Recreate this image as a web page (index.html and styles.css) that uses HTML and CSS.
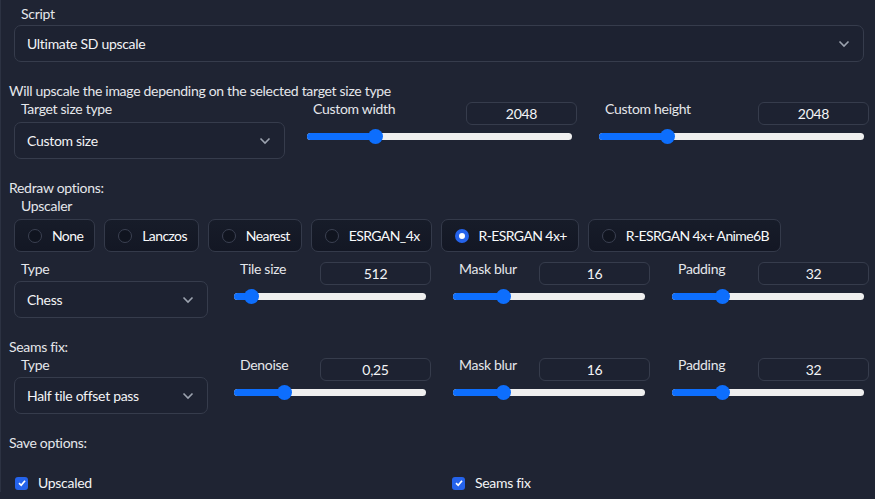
FILE: index.html
```html
<!DOCTYPE html>
<html>
	<head>
		<meta charset="UTF-8">
		<title>Ultimate SD upscale</title>
		<link rel="stylesheet" href="styles.css">
	</head>
	<body>
		<div class="panel">
			<div class="block">
				<div class="label">Script</div>
				<div class="dropdown big">
					<span>Ultimate SD upscale</span>
					<svg class="chev" width="12" height="8" viewBox="0 0 12 8"><polyline points="1.5,1.5 6,6 10.5,1.5" fill="none" stroke="#9ca3af" stroke-width="1.6"/></svg>
				</div>
			</div>

			<p class="info desc">Will upscale the image depending on the selected target size type</p>
			<div class="row three">
				<div class="col">
					<div class="label">Target size type</div>
					<div class="dropdown">
						<span>Custom size</span>
						<svg class="chev" width="12" height="8" viewBox="0 0 12 8"><polyline points="1.5,1.5 6,6 10.5,1.5" fill="none" stroke="#9ca3af" stroke-width="1.6"/></svg>
					</div>
				</div>
				<div class="col slider">
					<div class="slider-head">
						<span class="label">Custom width</span>
						<div class="num">2048</div>
					</div>
					<div class="range"><div class="fill" style="width:25.5%"></div><div class="thumb" style="left:25.5%"></div></div>
				</div>
				<div class="col slider">
					<div class="slider-head">
						<span class="label">Custom height</span>
						<div class="num">2048</div>
					</div>
					<div class="range"><div class="fill" style="width:25.5%"></div><div class="thumb" style="left:25.5%"></div></div>
				</div>
			</div>

			<p class="info sect">Redraw options:</p>
			<div class="block">
				<div class="label">Upscaler</div>
				<div class="radios">
					<label class="radio"><i></i>None</label>
					<label class="radio"><i></i>Lanczos</label>
					<label class="radio"><i></i>Nearest</label>
					<label class="radio"><i></i>ESRGAN_4x</label>
					<label class="radio on"><i></i>R-ESRGAN 4x+</label>
					<label class="radio"><i></i>R-ESRGAN 4x+ Anime6B</label>
				</div>
			</div>
			<div class="row four after-radios">
				<div class="col">
					<div class="label">Type</div>
					<div class="dropdown short">
						<span>Chess</span>
						<svg class="chev" width="12" height="8" viewBox="0 0 12 8"><polyline points="1.5,1.5 6,6 10.5,1.5" fill="none" stroke="#9ca3af" stroke-width="1.6"/></svg>
					</div>
				</div>
				<div class="col slider">
					<div class="slider-head"><span class="label">Tile size</span><div class="num">512</div></div>
					<div class="range"><div class="fill" style="width:9%"></div><div class="thumb" style="left:9%"></div></div>
				</div>
				<div class="col slider">
					<div class="slider-head"><span class="label">Mask blur</span><div class="num">16</div></div>
					<div class="range"><div class="fill" style="width:26%"></div><div class="thumb" style="left:26%"></div></div>
				</div>
				<div class="col slider">
					<div class="slider-head"><span class="label">Padding</span><div class="num">32</div></div>
					<div class="range"><div class="fill" style="width:26%"></div><div class="thumb" style="left:26%"></div></div>
				</div>
			</div>

			<p class="info sect">Seams fix:</p>
			<div class="row four">
				<div class="col">
					<div class="label">Type</div>
					<div class="dropdown short">
						<span>Half tile offset pass</span>
						<svg class="chev" width="12" height="8" viewBox="0 0 12 8"><polyline points="1.5,1.5 6,6 10.5,1.5" fill="none" stroke="#9ca3af" stroke-width="1.6"/></svg>
					</div>
				</div>
				<div class="col slider">
					<div class="slider-head"><span class="label">Denoise</span><div class="num">0,25</div></div>
					<div class="range"><div class="fill" style="width:26%"></div><div class="thumb" style="left:26%"></div></div>
				</div>
				<div class="col slider">
					<div class="slider-head"><span class="label">Mask blur</span><div class="num">16</div></div>
					<div class="range"><div class="fill" style="width:26%"></div><div class="thumb" style="left:26%"></div></div>
				</div>
				<div class="col slider">
					<div class="slider-head"><span class="label">Padding</span><div class="num">32</div></div>
					<div class="range"><div class="fill" style="width:26%"></div><div class="thumb" style="left:26%"></div></div>
				</div>
			</div>

			<p class="info sect">Save options:</p>
			<div class="checks">
				<label class="check"><i><svg width="10" height="10" viewBox="0 0 10 10"><polyline points="2,5.2 4.2,7.3 8,2.8" fill="none" stroke="#fff" stroke-width="1.7"/></svg></i>Upscaled</label>
				<label class="check"><i><svg width="10" height="10" viewBox="0 0 10 10"><polyline points="2,5.2 4.2,7.3 8,2.8" fill="none" stroke="#fff" stroke-width="1.7"/></svg></i>Seams fix</label>
			</div>
		</div>
	</body>
</html>
```

FILE: styles.css
```css
*{
	margin:0;
	padding:0;
	box-sizing:border-box;
}
body{
	background:#1f2433;
	color:#e5e7eb;
	font-family:Lato,"Noto Sans",sans-serif;
	font-size:14px;
	line-height:18px;
	letter-spacing:-0.3px;
	height:499px;
	overflow:hidden;
}
.panel{
	padding:5px 8px 0 8px;
	border-left:1px solid #2c3242;
}
.block{
	padding:0 3px 0 5px;
}
.label{
	display:block;
	padding-left:7px;
	color:#e5e7eb;
}
.dropdown{
	position:relative;
	display:flex;
	align-items:center;
	height:37px;
	margin-top:2px;
	padding:0 12px;
	border:1px solid #363c4c;
	border-radius:7px;
	background:#1d2231;
	color:#f3f4f6;
}
.dropdown .chev{
	position:absolute;
	right:13px;
	top:14px;
}
.dropdown.short{
	width:194px;
}
.info{
	color:#e5e7eb;
}
.desc{
	margin-top:20px;
}
.sect{
	margin-top:20px;
}
.row{
	display:grid;
	column-gap:21px;
	padding:0 0 0 5px;
}
.row.three{
	grid-template-columns:271px 271px 271px;
}
.row.four{
	grid-template-columns:198px 198px 198px 198px;
}
.row.after-radios{
	margin-top:8px;
}
.row .dropdown{
	margin-top:4px;
}
.row.four .dropdown{
	margin-top:3px;
}
.slider-head{
	display:flex;
	justify-content:space-between;
	align-items:flex-start;
	height:26px;
	margin-top:2px;
}
.slider-head .label{
	margin-top:-2px;
}
.num{
	width:111px;
	height:23px;
	border:1px solid #363c4c;
	border-radius:6px;
	background:#1d2231;
	text-align:center;
	line-height:21px;
	color:#f3f4f6;
}
.range{
	position:relative;
	height:7px;
	margin:5px 5px 0 1px;
	border-radius:4px;
	background:#efefef;
}
.range .fill{
	height:7px;
	border-radius:4px 0 0 4px;
	background:#0d6efd;
}
.range .thumb{
	position:absolute;
	top:-4px;
	width:15px;
	height:15px;
	margin-left:-7px;
	border-radius:50%;
	background:#0d6efd;
}
.radios{
	display:flex;
	gap:9px;
	margin-top:4px;
}
.radio{
	display:flex;
	align-items:center;
	height:33px;
	padding:0 11px 0 13px;
	border:1px solid #343a4a;
	border-radius:7px;
	background:linear-gradient(#171c29,#131724);
	color:#f9fafb;
	letter-spacing:-0.6px;
}
.radio i{
	width:14px;
	height:14px;
	margin-right:10px;
	border:1px solid #3b4152;
	border-radius:50%;
	background:#10141f;
}
.radio.on i{
	border:4px solid #2563eb;
	background:#fff;
}
.checks{
	display:grid;
	grid-template-columns:437px 1fr;
	margin-top:22px;
	padding-left:6px;
}
.check{
	display:flex;
	align-items:center;
	color:#f3f4f6;
}
.check i{
	display:flex;
	align-items:center;
	justify-content:center;
	width:13px;
	height:13px;
	margin-right:10px;
	border-radius:3px;
	background:#2563eb;
}
```
